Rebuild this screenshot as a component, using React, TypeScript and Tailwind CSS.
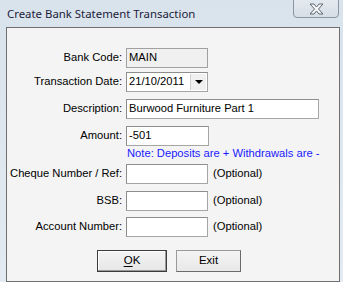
import React from "react";

const labelCls =
  "w-[116px] pr-[1px] text-right whitespace-nowrap text-black";
const inputCls =
  "h-[20px] border border-[#a5a5a5] border-t-[#8d8d8d] border-l-[#8d8d8d] bg-white px-[2px] flex items-center text-black";

function Row({
  label,
  mt,
  children,
}: {
  label: string;
  mt: string;
  children: React.ReactNode;
}) {
  return (
    <div className={`flex items-center ${mt}`}>
      <div className={labelCls}>{label}</div>
      <div className="ml-[3px] flex items-center">{children}</div>
    </div>
  );
}

export default function App() {
  return (
    <div
      className="w-[343px] h-[282px] bg-gradient-to-b from-[#d9e3ec] to-[#e3eaf1] overflow-hidden"
      style={{ fontFamily: '"Liberation Sans", Arial, sans-serif' }}
    >
      {/* title bar */}
      <div className="h-[27px] flex items-start relative">
        <div
          className="pl-[7px] pt-[6px] text-[11.4px] text-[#1b1b3a]"
          style={{ fontFamily: '"Noto Sans", sans-serif', lineHeight: "16px" }}
        >
          Create Bank Statement Transaction
        </div>
        <div className="absolute left-[293px] top-[-2px] w-[46px] h-[20px] rounded-b-[4px] border border-[#8c96a0] bg-gradient-to-b from-[#e4eaf0] to-[#d6dee6] flex items-center justify-center pt-[2px]">
          <svg width="17" height="12" viewBox="0 0 17 12">
            <path
              d="M2 1 L6 1 L8.5 4 L11 1 L15 1 L10.5 6 L15 11 L11 11 L8.5 8 L6 11 L2 11 L6.5 6 Z"
              fill="#f4f6f8"
              stroke="#5d6670"
              strokeWidth="1"
              strokeLinejoin="round"
            />
          </svg>
        </div>
      </div>

      {/* panel */}
      <div className="ml-[6px] mr-[3px] h-[255px] border border-[#6f6f6f] bg-[#f4f4f4] text-[11.2px] leading-none">
        <Row label="Bank Code:" mt="mt-[20px]">
          <div className={`${inputCls} w-[82px] !bg-[#f0f0f0] !border-[#a0a0a0]`}>MAIN</div>
        </Row>
        <Row label="Transaction Date:" mt="mt-[4px]">
          <div className={`${inputCls} w-[82px] justify-between !pr-[1px]`}>
            <span>21/10/2011</span>
            <span className="w-[16px] h-[16px] bg-[#f0f0f0] border-l border-[#d0d0d0] flex items-center justify-center">
              <svg width="8" height="4" viewBox="0 0 8 4">
                <path d="M0 0 L8 0 L4 4 Z" fill="#000" />
              </svg>
            </span>
          </div>
        </Row>
        <Row label="Description:" mt="mt-[7px]">
          <div className={`${inputCls} w-[193px]`}>Burwood Furniture Part 1</div>
        </Row>
        <Row label="Amount:" mt="mt-[7px]">
          <div className={`${inputCls} w-[83px]`}>-501</div>
        </Row>
        <div className="h-[16px] flex items-center pl-[120px] text-[#1a1aff] whitespace-nowrap">
          Note: Deposits are + Withdrawals are -
        </div>
        <Row label="Cheque Number / Ref:" mt="mt-[2px]">
          <div className={`${inputCls} w-[82px]`}></div>
          <span className="ml-[5px]">(Optional)</span>
        </Row>
        <Row label="BSB:" mt="mt-[7px]">
          <div className={`${inputCls} w-[82px]`}></div>
          <span className="ml-[5px]">(Optional)</span>
        </Row>
        <Row label="Account Number:" mt="mt-[6px]">
          <div className={`${inputCls} w-[82px]`}></div>
          <span className="ml-[5px]">(Optional)</span>
        </Row>
        <div className="mt-[13px] flex pl-[90px] gap-[9px] text-[11.5px]">
          <button className="w-[70px] h-[22px] border border-[#3c3c3c] bg-gradient-to-b from-[#f4f4f4] to-[#e6e6e6] shadow-[inset_-1px_-1px_0_#9a9a9a,inset_1px_1px_0_#ffffff] text-black">
            <span className="underline underline-offset-2">O</span>K
          </button>
          <button className="w-[65px] h-[22px] border border-[#9a9a9a] border-r-[#6a6a6a] border-b-[#6a6a6a] bg-gradient-to-b from-[#f4f4f4] to-[#e8e8e8] text-black">
            Exit
          </button>
        </div>
      </div>
    </div>
  );
}
